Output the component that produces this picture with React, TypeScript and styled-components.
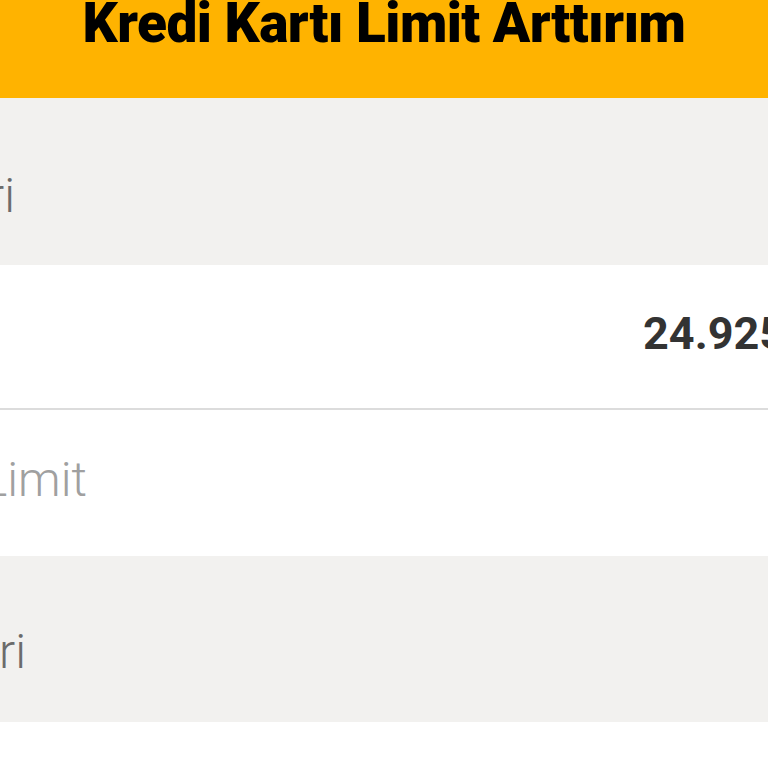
import React from "react";
import styled, { createGlobalStyle } from "styled-components";

const Global = createGlobalStyle`
  html, body { margin: 0; padding: 0; background: #ffffff; overflow: hidden; }
  body { font-family: Roboto, "Liberation Sans", sans-serif; }
`;

const Page = styled.div`
  width: 768px;
  height: 768px;
  overflow: hidden;
  display: flex;
  flex-direction: column;
  background: #ffffff;
`;

const Header = styled.header`
  height: 98px;
  flex: none;
  background: #ffb300;
  display: flex;
  justify-content: center;
  align-items: flex-start;
`;

const Title = styled.h1`
  margin: 0;
  margin-top: -10px;
  font-family: Roboto, "Liberation Sans", sans-serif;
  font-weight: 900;
  font-size: 55px;
  line-height: 66px;
  letter-spacing: -0.55px;
  color: #000000;
  white-space: nowrap;
`;

const Row = styled.div<{ $tone: "gray" | "white"; $h: number; $top: number; $divider?: boolean }>`
  height: ${(p) => p.$h}px;
  flex: none;
  background: ${(p) => (p.$tone === "gray" ? "#f2f1ef" : "#ffffff")};
  border-bottom: ${(p) => (p.$divider ? "2px solid #dcdcdc" : "none")};
  box-sizing: border-box;
  padding-top: ${(p) => p.$top}px;
  display: flex;
  align-items: flex-start;
  overflow: hidden;
  white-space: nowrap;
`;

const Label = styled.span<{ $shift: number; $color: string }>`
  margin-left: ${(p) => p.$shift}px;
  font-family: Roboto, "Liberation Sans", sans-serif;
  font-weight: 300;
  font-size: 48px;
  line-height: 48px;
  color: ${(p) => p.$color};
`;

const Value = styled.span`
  margin-left: 643px;
  font-family: Roboto, "Liberation Sans", sans-serif;
  font-weight: 700;
  font-size: 45px;
  line-height: 45px;
  color: #333333;
`;

export default function App() {
  return (
    <>
      <Global />
      <Page>
        <Header>
          <Title>Kredi Kartı Limit Arttırım</Title>
        </Header>
        <Row $tone="gray" $h={167} $top={74}>
          <Label $shift={-12} $color="#6b6b6b">ri</Label>
        </Row>
        <Row $tone="white" $h={145} $top={46} $divider>
          <Value>24.925 TL</Value>
        </Row>
        <Row $tone="white" $h={146} $top={46}>
          <Label $shift={-18} $color="#a0a0a0">Limit</Label>
        </Row>
        <Row $tone="gray" $h={166} $top={72}>
          <Label $shift={-1} $color="#6b6b6b">ri</Label>
        </Row>
        <Row $tone="white" $h={48} $top={0} />
      </Page>
    </>
  );
}
